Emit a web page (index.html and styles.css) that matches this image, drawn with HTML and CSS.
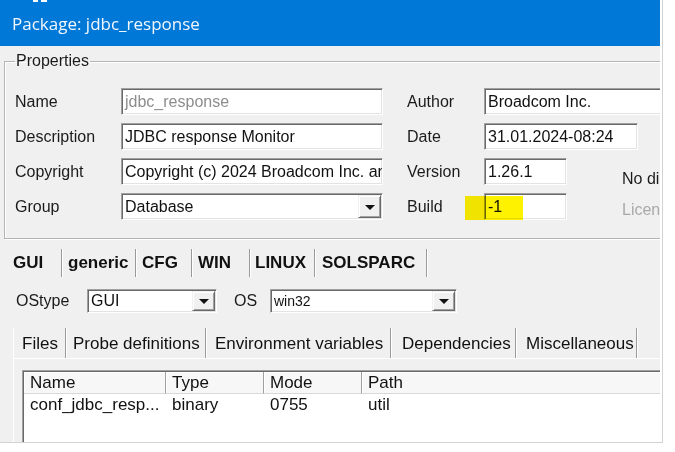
FILE: index.html
```html
<!DOCTYPE html>
<html>
<head>
<meta charset="utf-8">
<link rel="stylesheet" href="styles.css">
</head>
<body>
<div class="window">
  <div class="titlebar">
    <div class="bits"><span class="bit1"></span><span class="bit2"></span></div>
    <div class="title">Package: jdbc_response</div>
  </div>
  <div class="body">
    <fieldset class="props">
      <legend>Properties</legend>
      <div class="grid">
        <div class="lbl">Name</div>
        <div class="field f-left"><span class="txt disabled">jdbc_response</span></div>
        <div class="lbl lbl2">Author</div>
        <div class="field f-author"><span class="txt">Broadcom Inc.</span></div>

        <div class="lbl">Description</div>
        <div class="field f-left"><span class="txt">JDBC response Monitor</span></div>
        <div class="lbl lbl2">Date</div>
        <div class="field f-date"><span class="txt">31.01.2024-08:24</span></div>

        <div class="lbl">Copyright</div>
        <div class="field f-left"><span class="txt">Copyright (c) 2024 Broadcom Inc. and</span></div>
        <div class="lbl lbl2">Version</div>
        <div class="field f-short"><span class="txt">1.26.1</span></div>
        <div class="note nodi">No di</div>

        <div class="lbl">Group</div>
        <div class="field f-left select"><span class="txt">Database</span><span class="ddbtn"><span class="arrow"></span></span></div>
        <div class="lbl lbl2">Build</div>
        <div class="field f-short build"><span class="txt">-1</span><span class="highlight"></span></div>
        <div class="note licen">Licen</div>
      </div>
    </fieldset>

    <div class="otabs">
      <div class="otab sel" style="width:54px;padding-left:5px">GUI</div>
      <div class="otab" style="width:74px;padding-left:6px">generic</div>
      <div class="otab" style="width:56px;padding-left:6px">CFG</div>
      <div class="otab" style="width:58px;padding-left:6px">WIN</div>
      <div class="otab" style="width:65px;padding-left:5px">LINUX</div>
      <div class="otab" style="width:112px;padding-left:7px">SOLSPARC</div>
    </div>

    <div class="tabpanel">
      <div class="osrow">
        <div class="oslbl">OStype</div>
        <div class="field select sel1"><span class="txt">GUI</span><span class="ddbtn"><span class="arrow"></span></span></div>
        <div class="oslbl os2">OS</div>
        <div class="field select sel2"><span class="txt small">win32</span><span class="ddbtn"><span class="arrow"></span></span></div>
      </div>

      <div class="itabs">
        <div class="itab sel" style="width:53px;padding-left:8px">Files</div>
        <div class="itab" style="width:140px;padding-left:7px">Probe definitions</div>
        <div class="itab" style="width:185px;padding-left:9px">Environment variables</div>
        <div class="itab" style="width:125px;padding-left:11px">Dependencies</div>
        <div class="itab" style="width:121px;padding-left:10px">Miscellaneous</div>
      </div>

      <div class="ipanel">
        <div class="list">
          <div class="lhead">
            <div class="hc c1">Name</div>
            <div class="hc c2">Type</div>
            <div class="hc c3">Mode</div>
            <div class="hc c4">Path</div>
          </div>
          <div class="lrow">
            <div class="rc c1">conf_jdbc_resp...</div>
            <div class="rc c2">binary</div>
            <div class="rc c3">0755</div>
            <div class="rc c4">util</div>
          </div>
        </div>
      </div>
    </div>
  </div>
</div>
</body>
</html>
```
FILE: styles.css
```css
html, body {
  margin: 0;
  padding: 0;
  background: #ffffff;
}

.window {
  width: 660px;
  padding-right: 2px;
  border-right: 1px solid #d2d2d2;
  border-bottom: 1px solid #d2d2d2;
  background: #ffffff;
  font-family: "Liberation Sans", Arial, sans-serif;
  color: #1b1b1b;
}

.titlebar {
  width: 660px;
  height: 46px;
  background: #0078d7;
  overflow: hidden;
}

.bits {
  display: flex;
  height: 2px;
  padding-left: 33px;
  gap: 3px;
}
.bit1 { width: 5px; background: #ffffff; }
.bit2 { width: 6px; background: #ffffff; }

.title {
  margin-top: 10px;
  padding-left: 12px;
  font-family: "Open Sans", "Noto Sans", sans-serif;
  font-size: 17px;
  line-height: 24px;
  color: #f2f7fd;
}

.body {
  width: 660px;
  height: 396px;
  background: #f0f0f0;
  overflow: hidden;
}

/* Properties group box */
.props {
  margin: 6px 0 0 4px;
  padding: 18px 0 18px 10px;
  border: 1px solid #b4b4b4;
  box-shadow: inset 1px 1px 0 #ffffff, 1px 1px 0 #ffffff;
  width: 720px;
  min-width: 0;
}
.props legend {
  padding: 0 1px;
  font-size: 16px;
  line-height: 18px;
  color: #1b1b1b;
}

.grid {
  display: grid;
  grid-template-columns: 106px 262px 24px 77px 138px 1fr;
  grid-auto-rows: 27px;
  row-gap: 8px;
}

.lbl {
  grid-column: 1;
  font-size: 16px;
  line-height: 27px;
}
.lbl2 {
  grid-column: 4;
}

.field {
  position: relative;
  box-sizing: border-box;
  height: 27px;
  background: #ffffff;
  border-style: solid;
  border-width: 1px;
  border-color: #a0a0a0 #ffffff #ffffff #a0a0a0;
  box-shadow: inset 1px 1px 0 #696969, inset -1px -1px 0 #e3e3e3;
  overflow: hidden;
  white-space: nowrap;
}
.f-left { grid-column: 2; }
.f-author { grid-column: 5 / span 2; width: 220px; }
.f-date { grid-column: 5 / span 2; width: 154px; }
.f-short { grid-column: 5; width: 83px; }

.txt {
  display: block;
  padding-left: 3px;
  font-size: 16px;
  line-height: 25px;
  color: #111111;
  overflow: hidden;
}
.txt.disabled { color: #8d8d8d; }
.txt.small { font-size: 14px; }

.build { overflow: visible; }
.highlight {
  position: absolute;
  left: -20px;
  top: 2px;
  width: 58px;
  height: 24px;
  background: #fff200;
  mix-blend-mode: multiply;
}

.note {
  grid-column: 6;
  font-size: 16px;
  line-height: 18px;
  white-space: nowrap;
  overflow: hidden;
}
.nodi { padding-top: 12px; color: #1b1b1b; }
.licen { padding-top: 8px; color: #a9a9a9; }

/* dropdown button */
.ddbtn {
  position: absolute;
  right: 1px;
  top: 1px;
  bottom: 1px;
  width: 23px;
  box-sizing: border-box;
  background: #f0f0f0;
  border-style: solid;
  border-width: 1px;
  border-color: #f0f0f0 #696969 #696969 #f0f0f0;
  box-shadow: inset 1px 1px 0 #ffffff, inset -1px -1px 0 #a0a0a0;
  display: flex;
  align-items: center;
  justify-content: center;
}
.arrow {
  width: 0;
  height: 0;
  border-left: 5px solid transparent;
  border-right: 5px solid transparent;
  border-top: 5px solid #111111;
  margin-top: 1px;
}

/* outer tabs */
.otabs {
  display: flex;
  margin: 10px 0 0 8px;
  height: 28px;
}
.otab {
  box-sizing: border-box;
  height: 28px;
  font-size: 17px;
  font-weight: bold;
  line-height: 28px;
  border-right: 1px solid #9a9a9a;
  box-shadow: 1px 0 0 #ffffff;
  white-space: nowrap;
  color: #111111;
}

.tabpanel {
  padding-top: 12px;
}

.osrow {
  display: flex;
  align-items: center;
  height: 24px;
  padding-left: 16px;
}
.oslbl {
  width: 71px;
  font-size: 16px;
  line-height: 24px;
}
.os2 {
  width: 36px;
  margin-left: 17px;
}
.osrow .field { height: 24px; }
.osrow .txt { line-height: 22px; }
.sel1 { width: 130px; }
.sel2 { width: 187px; }

/* inner tabs */
.itabs {
  display: flex;
  margin: 15px 0 0 13px;
  height: 30px;
}
.itab {
  box-sizing: border-box;
  height: 30px;
  font-size: 17px;
  line-height: 31px;
  border-right: 1px solid #9a9a9a;
  box-shadow: 1px 0 0 #ffffff;
  white-space: nowrap;
  color: #111111;
}
.itab.sel {
  border-left: 1px solid #ffffff;
}

.ipanel {
  margin-left: 13px;
  border-left: 1px solid #ffffff;
  border-top: 1px solid #ffffff;
  padding: 11px 0 0 8px;
}

.list {
  width: 700px;
  height: 80px;
  box-sizing: border-box;
  background: #ffffff;
  border-style: solid;
  border-width: 1px;
  border-color: #a0a0a0 #ffffff #ffffff #a0a0a0;
  box-shadow: inset 1px 1px 0 #696969;
  padding: 1px 0 0 1px;
}

.lhead, .lrow {
  display: flex;
}
.lhead {
  height: 22px;
  background: #f7f7f7;
}
.hc {
  box-sizing: border-box;
  height: 22px;
  padding-left: 6px;
  font-size: 17px;
  line-height: 22px;
  border-right: 1px solid #a0a0a0;
  border-bottom: 1px solid #d8d8d8;
  box-shadow: inset 1px 1px 0 #ffffff;
  color: #111111;
}
.rc {
  box-sizing: border-box;
  height: 22px;
  padding-left: 6px;
  font-size: 17px;
  line-height: 22px;
  white-space: nowrap;
  color: #111111;
}
.c1 { width: 142px; }
.c2 { width: 98px; }
.c3 { width: 98px; }
.c4 { width: 340px; }
```
